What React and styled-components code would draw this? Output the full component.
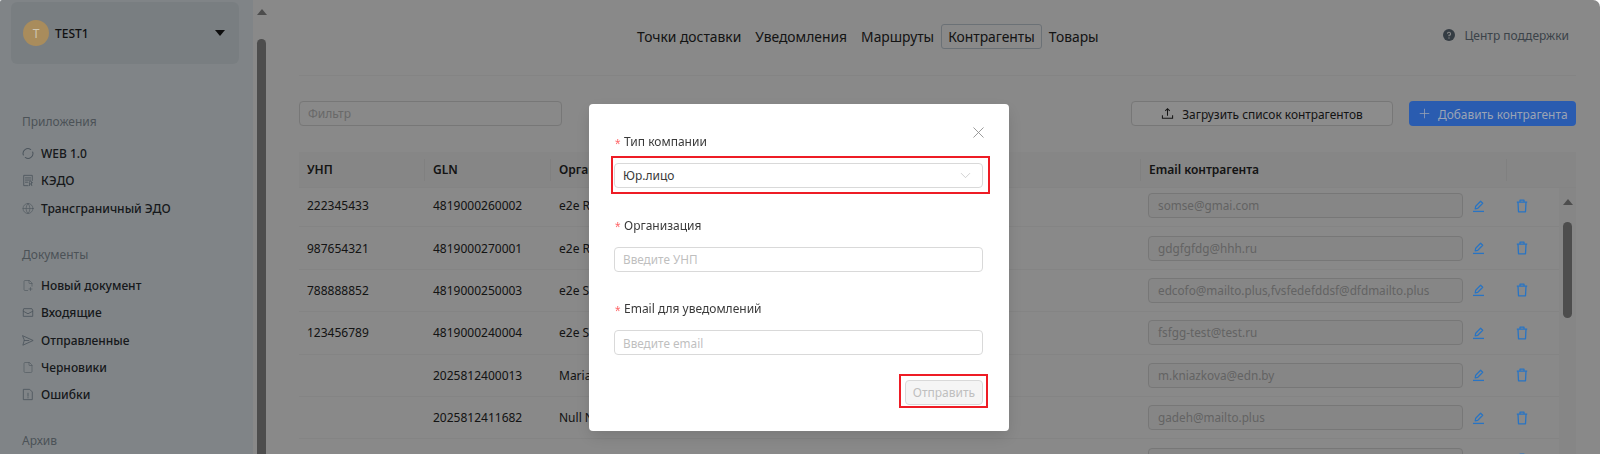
import React from "react";
import styled, { createGlobalStyle } from "styled-components";
import { File, FilePlus2, Globe, X, ChevronDown, Plus } from "lucide-react";

const Global = createGlobalStyle`
  html, body { margin: 0; padding: 0; height: 454px; overflow: hidden; background: #fff; }
  * { box-sizing: border-box; }
  body { font-family: "Noto Sans", "Open Sans", sans-serif; font-size: 12px; color: #262626; }
`;

const Page = styled.div`
  display: flex;
  width: 1600px;
  height: 454px;
  overflow: hidden;
  background: #f9f9f9;
  border-radius: 2px 7px 0 0;
`;
const Sidebar = styled.aside`
  width: 253px;
  flex: none;
  background: #e9f1f6;
  padding: 2px 14px 0 11px;
`;
const Account = styled.div`
  display: flex;
  align-items: center;
  height: 62px;
  padding: 0 12px;
  background: #dde6ec;
  border-radius: 6px;
`;
const Avatar = styled.span`
  position: relative;
  z-index: 2;
  width: 26px;
  height: 26px;
  flex: none;
  display: flex;
  align-items: center;
  justify-content: center;
  border-radius: 50%;
  background: #a98c5c;
  color: #cfc6b2;
  font-size: 12px;
`;
const AccountName = styled.span`
  margin-left: 6px;
  flex: 1;
  font-size: 12px;
  font-weight: 500;
  color: #1f1f1f;
`;
const Caret = styled.span`
  width: 0;
  height: 0;
  margin-right: 2px;
  border-left: 5.5px solid transparent;
  border-right: 5.5px solid transparent;
  border-top: 6px solid #1a1a1a;
`;
const Section = styled.section`
  margin: ${(p) => p.$top}px 0 0 11px;
`;
const SectionTitle = styled.div`
  height: 18px;
  line-height: 18px;
  font-size: 12px;
  color: #8b969f;
  margin-bottom: ${(p) => p.$gap ?? 9}px;
`;
const NavItem = styled.div`
  display: flex;
  align-items: center;
  gap: 7px;
  height: 27.3px;
  font-size: 12px;
  font-weight: 500;
  color: #2b2f33;
  svg { flex: none; width: 12px; height: 13px; color: #8b9aa8; }
`;

const Gutter = styled.div`
  width: 17px;
  flex: none;
  display: flex;
  flex-direction: column;
  align-items: center;
  padding-top: 9px;
`;
const ArrowUp = styled.span`
  width: 0;
  height: 0;
  flex: none;
  border-left: 5.5px solid transparent;
  border-right: 5.5px solid transparent;
  border-bottom: 6px solid #8c8c8c;
`;
const Thumb = styled.span`
  display: block;
  width: 9px;
  flex: none;
  height: ${(p) => p.$h};
  margin-top: ${(p) => p.$top}px;
  background: #8c8c8c;
  border-radius: 5px;
`;

const Main = styled.main`
  flex: 1;
  min-width: 0;
  padding: 0 24px 0 29px;
`;
const TopBar = styled.header`
  display: flex;
  align-items: center;
  height: 76px;
  padding: 0 7px 2px 331px;
  border-bottom: 1px solid #f0f0f0;
`;
const TopNav = styled.nav`
  display: flex;
  align-items: center;
`;
const TopLink = styled.a`
  height: 25px;
  line-height: 23px;
  padding: 0 6px;
  font-size: 13.85px;
  color: #262626;
  border: 1px solid ${(p) => (p.$active ? "#c4ced8" : "transparent")};
  border-radius: 3px;
  white-space: nowrap;
`;
const Support = styled.div`
  margin-left: auto;
  display: flex;
  align-items: center;
  gap: 9px;
  margin-top: -3px;
  font-size: 12px;
  color: #6d7a86;
`;
const Toolbar = styled.div`
  display: flex;
  align-items: center;
  margin-top: 25px;
  height: 25px;
`;
const FilterBox = styled.div`
  width: 263px;
  height: 25px;
  line-height: 23px;
  padding: 0 8px;
  font-size: 12px;
  color: #bfbfbf;
  border: 1px solid #d9d9d9;
  border-radius: 4px;
`;
const UploadButton = styled.button`
  margin-left: auto;
  width: 262px;
  height: 25px;
  display: flex;
  align-items: center;
  justify-content: center;
  gap: 8px;
  font: inherit;
  font-size: 11.9px;
  color: #262626;
  background: #fff;
  border: 1px solid #d9d9d9;
  border-radius: 4px;
  padding: 0;
`;
const AddButton = styled.button`
  position: relative;
  z-index: 2;
  margin-left: 16px;
  width: 167px;
  height: 25px;
  display: flex;
  align-items: center;
  gap: 6px;
  padding: 0 0 0 8px;
  font: inherit;
  font-size: 11.9px;
  white-space: nowrap;
  color: #9ca4b4;
  background: #2a5cb0;
  border: 0;
  border-radius: 4px;
`;
const Table = styled.div`
  margin-top: 26px;
`;
const Head = styled.div`
  display: grid;
  grid-template-columns: 126px 126px 590px 366px 1fr;
  height: 36px;
  align-items: center;
  background: #f5f5f5;
  border-bottom: 1px solid #f0f0f0;
`;
const HeadCell = styled.div`
  height: 22px;
  line-height: 22px;
  padding-left: 8px;
  font-size: 12px;
  font-weight: 600;
  color: #262626;
  border-right: 1px solid #eaeaea;
  &:last-child { border-right: 0; }
`;
const BodyWrap = styled.div`
  display: flex;
  height: 270px;
  overflow: hidden;
`;
const Rows = styled.div`
  width: 1260px;
  flex: none;
  margin-top: -3px;
`;
const Row = styled.div`
  display: grid;
  grid-template-columns: 126px 126px 589px 367px 1fr;
  height: 42.4px;
  align-items: center;
  border-bottom: 1px solid #f0f0f0;
`;
const Cell = styled.div`
  padding-left: 8px;
  font-size: 12px;
  color: #262626;
  white-space: nowrap;
`;
const EmailBox = styled.div`
  width: 315px;
  height: 25px;
  margin-left: 8px;
  padding: 0 9px;
  line-height: 23px;
  font-size: 11.75px;
  color: #b4b4b4;
  background: #f5f5f5;
  border: 1px solid #d9d9d9;
  border-radius: 4px;
  white-space: nowrap;
`;
const Actions = styled.div`
  position: relative;
  z-index: 2;
  display: flex;
  align-items: center;
  margin-left: -35px;
  gap: 31px;
  color: #2874c4;
`;
const BodyScroll = styled.div`
  flex: 1;
  display: flex;
  flex-direction: column;
  align-items: center;
  padding-top: 11px;
  background: #f4f4f4;
`;

const Overlay = styled.div`
  position: fixed;
  inset: 0;
  z-index: 1;
  display: flex;
  justify-content: center;
  padding: 104px 2px 0 0;
  background: rgba(0, 0, 0, 0.45);
  border-radius: 2px 7px 0 0;
`;
const Modal = styled.div`
  position: relative;
  z-index: 3;
  width: 420px;
  height: 327px;
  padding: 0 26px 0 25px;
  background: #fff;
  border-radius: 4px;
  box-shadow: 0 6px 16px rgba(0, 0, 0, 0.12);
`;
const Close = styled.span`
  position: absolute;
  top: 19px;
  right: 21px;
  display: flex;
  color: #8c8c8c;
`;
const Form = styled.div`
  padding-top: 27px;
`;
const Field = styled.div`
  height: 83.7px;
`;
const Label = styled.label`
  display: flex;
  align-items: center;
  height: 21px;
  margin-bottom: 11px;
  font-size: 12px;
  color: #3a3a3a;
`;
const Required = styled.span`
  width: 10px;
  padding: 4px 0 0 1px;
  color: #ff6668;
  font-family: "Liberation Sans", sans-serif;
  font-size: 14px;
  line-height: 1;
`;
const Control = styled.div`
  position: relative;
  display: flex;
  align-items: center;
  justify-content: space-between;
  height: 25px;
  padding: 0 8px;
  font-size: ${(p) => (p.$placeholder ? "11.75px" : "12px")};
  color: ${(p) => (p.$placeholder ? "#bfbfbf" : "#3a3a3a")};
  background: #fff;
  border: 1px solid #d9d9d9;
  border-radius: 4px;
  svg { color: #bfbfbf; }
`;
const Highlight = styled.span`
  position: absolute;
  inset: ${(p) => p.$inset};
  border: 2.5px solid #ee1c25;
  pointer-events: none;
`;
const Footer = styled.div`
  display: flex;
  justify-content: flex-end;
  margin-top: -2px;
`;
const SubmitButton = styled.button`
  position: relative;
  width: 78px;
  height: 25px;
  padding: 0;
  font: inherit;
  font-size: 12px;
  color: #bfbfbf;
  background: #f5f5f5;
  border: 1px solid #d9d9d9;
  border-radius: 4px;
`;

const IconSvg = ({ children, size = 13 }) => (
  <svg width={size} height={size} viewBox="0 0 14 14" fill="none" stroke="currentColor" strokeWidth="1" strokeLinecap="round" strokeLinejoin="round">
    {children}
  </svg>
);
const SyncIcon = () => (
  <IconSvg>
    <path d="M1.6 8.8A5.6 5.6 0 0 1 10.2 2.4" strokeWidth="1.2" />
    <path d="M12.4 5.2A5.6 5.6 0 0 1 3.8 11.6" strokeWidth="1.2" />
  </IconSvg>
);
const KedoIcon = () => (
  <IconSvg>
    <path d="M7 13H2V1h10v6" />
    <path d="M4 4h6M4 6.5h6M4 9h2.5" />
    <circle cx="10" cy="9.5" r="1.6" />
    <path d="M9 11l-.4 2M11 11l.4 2" />
  </IconSvg>
);
const InboxIcon = () => (
  <IconSvg>
    <path d="M2.5 2.5h9l1 2v7h-11v-7z" />
    <path d="M1.5 5.5l5.5 3 5.5-3" />
  </IconSvg>
);
const SendIcon = () => (
  <IconSvg>
    <path d="M1 1.5L13 7 1 12.5 2.6 7z" />
    <path d="M2.6 7H8" />
  </IconSvg>
);
const FileAlert = () => (
  <IconSvg>
    <path d="M2 1h7l3 3v9H2z" />
    <path d="M7 5.5v3.5M7 10.6v.4" />
  </IconSvg>
);
const HelpFilled = () => (
  <svg width="12" height="12" viewBox="0 0 12 12">
    <circle cx="6" cy="6" r="6" fill="#5f6d7a" />
    <path d="M4.4 4.6A1.6 1.6 0 1 1 6 6.4v.9" fill="none" stroke="#f9f9f9" strokeWidth="1.1" />
    <circle cx="6" cy="9" r=".7" fill="#f9f9f9" />
  </svg>
);
const UploadIcon = () => (
  <svg width="13" height="13" viewBox="0 0 14 14" fill="none" stroke="#262626" strokeWidth="1.1">
    <path d="M7 9.5V2M4.6 4.2L7 1.8l2.4 2.4M1.5 9v3h11V9" />
  </svg>
);
const EditIcon = () => (
  <svg width="13" height="14" viewBox="0 0 13 14" fill="none" stroke="currentColor" strokeWidth="1.25" strokeLinejoin="round">
    <path d="M3.2 9.8l.5-2.6L8.6 2.2l2.1 2.1-4.9 5z" />
    <path d="M1 12.4h11" strokeWidth="1.3" />
  </svg>
);
const TrashIcon = () => (
  <svg width="12" height="14" viewBox="0 0 12 14" fill="none" stroke="currentColor" strokeWidth="1.3" strokeLinejoin="round">
    <path d="M.8 3.2h10.4M4 3V1.2h4V3" />
    <path d="M2 3.2l.5 9.6h7l.5-9.6" />
  </svg>
);

const rows = [
  ["222345433", "4819000260002", "e2e Retailer 2", "somse@gmai.com"],
  ["987654321", "4819000270001", "e2e Retailer 1", "gdgfgfdg@hhh.ru"],
  ["788888852", "4819000250003", "e2e Supplier 2", "edcofo@mailto.plus,fvsfedefddsf@dfdmailto.plus"],
  ["123456789", "4819000240004", "e2e Supplier 1", "fsfgg-test@test.ru"],
  ["", "2025812400013", "Maria", "m.kniazkova@edn.by"],
  ["", "2025812411682", "Null Null", "gadeh@mailto.plus"],
  ["", "", "", ""],
];

export default function App() {
  return (
    <Page>
      <Global />
      <Sidebar>
        <Account>
          <Avatar>T</Avatar>
          <AccountName>TEST1</AccountName>
          <Caret />
        </Account>
        <Section $top={49}>
          <SectionTitle>Приложения</SectionTitle>
          <NavItem><SyncIcon />WEB 1.0</NavItem>
          <NavItem><KedoIcon />КЭДО</NavItem>
          <NavItem><Globe strokeWidth={1.2} />Трансграничный ЭДО</NavItem>
        </Section>
        <Section $top={24}>
          <SectionTitle $gap={8}>Документы</SectionTitle>
          <NavItem><FilePlus2 strokeWidth={1.2} />Новый документ</NavItem>
          <NavItem><InboxIcon />Входящие</NavItem>
          <NavItem><SendIcon />Отправленные</NavItem>
          <NavItem><File strokeWidth={1.2} />Черновики</NavItem>
          <NavItem><FileAlert />Ошибки</NavItem>
        </Section>
        <Section $top={24}>
          <SectionTitle>Архив</SectionTitle>
        </Section>
      </Sidebar>
      <Gutter>
        <ArrowUp />
        <Thumb $h="420px" $top={24} />
      </Gutter>
      <Main>
        <TopBar>
          <TopNav>
            <TopLink>Точки доставки</TopLink>
            <TopLink>Уведомления</TopLink>
            <TopLink>Маршруты</TopLink>
            <TopLink $active>Контрагенты</TopLink>
            <TopLink>Товары</TopLink>
          </TopNav>
          <Support><HelpFilled /><span>Центр поддержки</span></Support>
        </TopBar>
        <Toolbar>
          <FilterBox>Фильтр</FilterBox>
          <UploadButton><UploadIcon /><span>Загрузить список контрагентов</span></UploadButton>
          <AddButton><Plus size={15} strokeWidth={1.2} /><span>Добавить контрагента</span></AddButton>
        </Toolbar>
        <Table>
          <Head>
            <HeadCell>УНП</HeadCell>
            <HeadCell>GLN</HeadCell>
            <HeadCell>Организация</HeadCell>
            <HeadCell>Email контрагента</HeadCell>
            <HeadCell />
          </Head>
          <BodyWrap>
            <Rows>
              {rows.map((r, i) => (
                <Row key={i}>
                  <Cell>{r[0]}</Cell>
                  <Cell>{r[1]}</Cell>
                  <Cell>{r[2]}</Cell>
                  <EmailBox>{r[3]}</EmailBox>
                  <Actions><EditIcon /><TrashIcon /></Actions>
                </Row>
              ))}
            </Rows>
            <BodyScroll>
              <ArrowUp />
              <Thumb $h="96px" $top={17} />
            </BodyScroll>
          </BodyWrap>
        </Table>
      </Main>
      <Overlay>
        <Modal>
          <Close><X size={19} strokeWidth={1.1} /></Close>
          <Form>
            <Field>
              <Label><Required>*</Required><span>Тип компании</span></Label>
              <Control>
                <span>Юр.лицо</span>
                <ChevronDown size={17} strokeWidth={1} />
                <Highlight $inset="-8px -8px -7px -4px" />
              </Control>
            </Field>
            <Field>
              <Label><Required>*</Required><span>Организация</span></Label>
              <Control $placeholder><span>Введите УНП</span></Control>
            </Field>
            <Field>
              <Label><Required>*</Required><span>Email для уведомлений</span></Label>
              <Control $placeholder><span>Введите email</span></Control>
            </Field>
            <Footer>
              <SubmitButton>
                Отправить
                <Highlight $inset="-7px -6px -4px -7px" />
              </SubmitButton>
            </Footer>
          </Form>
        </Modal>
      </Overlay>
    </Page>
  );
}
